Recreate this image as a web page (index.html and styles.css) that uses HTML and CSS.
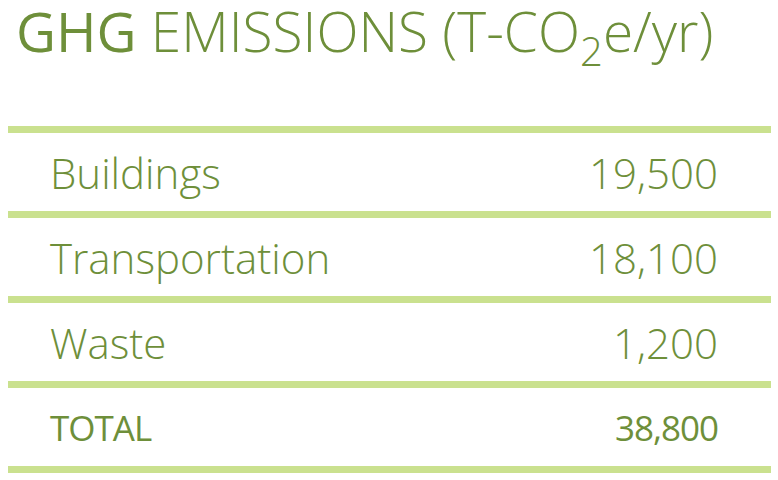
FILE: index.html
```html
<!DOCTYPE html>
<html>
<head>
    <title>GHG Emissions</title>
    <link rel="stylesheet" href="styles.css">
</head>
<body>
    <div class="panel">
        <h1 class="title"><span class="title-strong">GHG</span> EMISSIONS (T-CO<sub>2</sub>e/yr)</h1>

        <div class="table">
            <div class="row">
                <span class="label">Buildings</span>
                <span class="value">19,500</span>
            </div>
            <div class="row">
                <span class="label">Transportation</span>
                <span class="value">18,100</span>
            </div>
            <div class="row">
                <span class="label">Waste</span>
                <span class="value">1,200</span>
            </div>
            <div class="row total">
                <span class="label">TOTAL</span>
                <span class="value">38,800</span>
            </div>
        </div>
    </div>
</body>
</html>
```

FILE: styles.css
```css
body {
    margin: 0;
    padding: 0;
    background-color: #fff;
    font-family: "Open Sans", "Liberation Sans", sans-serif;
    color: #6e8f3a;
}

.panel {
    width: 778px;
    height: 480px;
}

.title {
    margin: 0;
    padding: 0 0 0 16px;
    height: 126px;
    font-size: 55px;
    font-weight: 300;
    line-height: 62px;
    white-space: nowrap;
}

.title-strong {
    font-weight: 500;
}

.title sub {
    font-size: 40px;
    vertical-align: -14px;
    line-height: 1;
}

.table {
    margin-left: 8px;
    width: 763px;
    border-bottom: 7px solid #cae18f;
}

.row {
    display: flex;
    justify-content: space-between;
    align-items: center;
    height: 78px;
    padding: 0 53px 0 42px;
    border-top: 7px solid #cae18f;
    font-size: 42px;
    font-weight: 300;
}

.row.total {
    font-size: 35px;
    font-weight: 400;
    letter-spacing: -1px;
}
```
